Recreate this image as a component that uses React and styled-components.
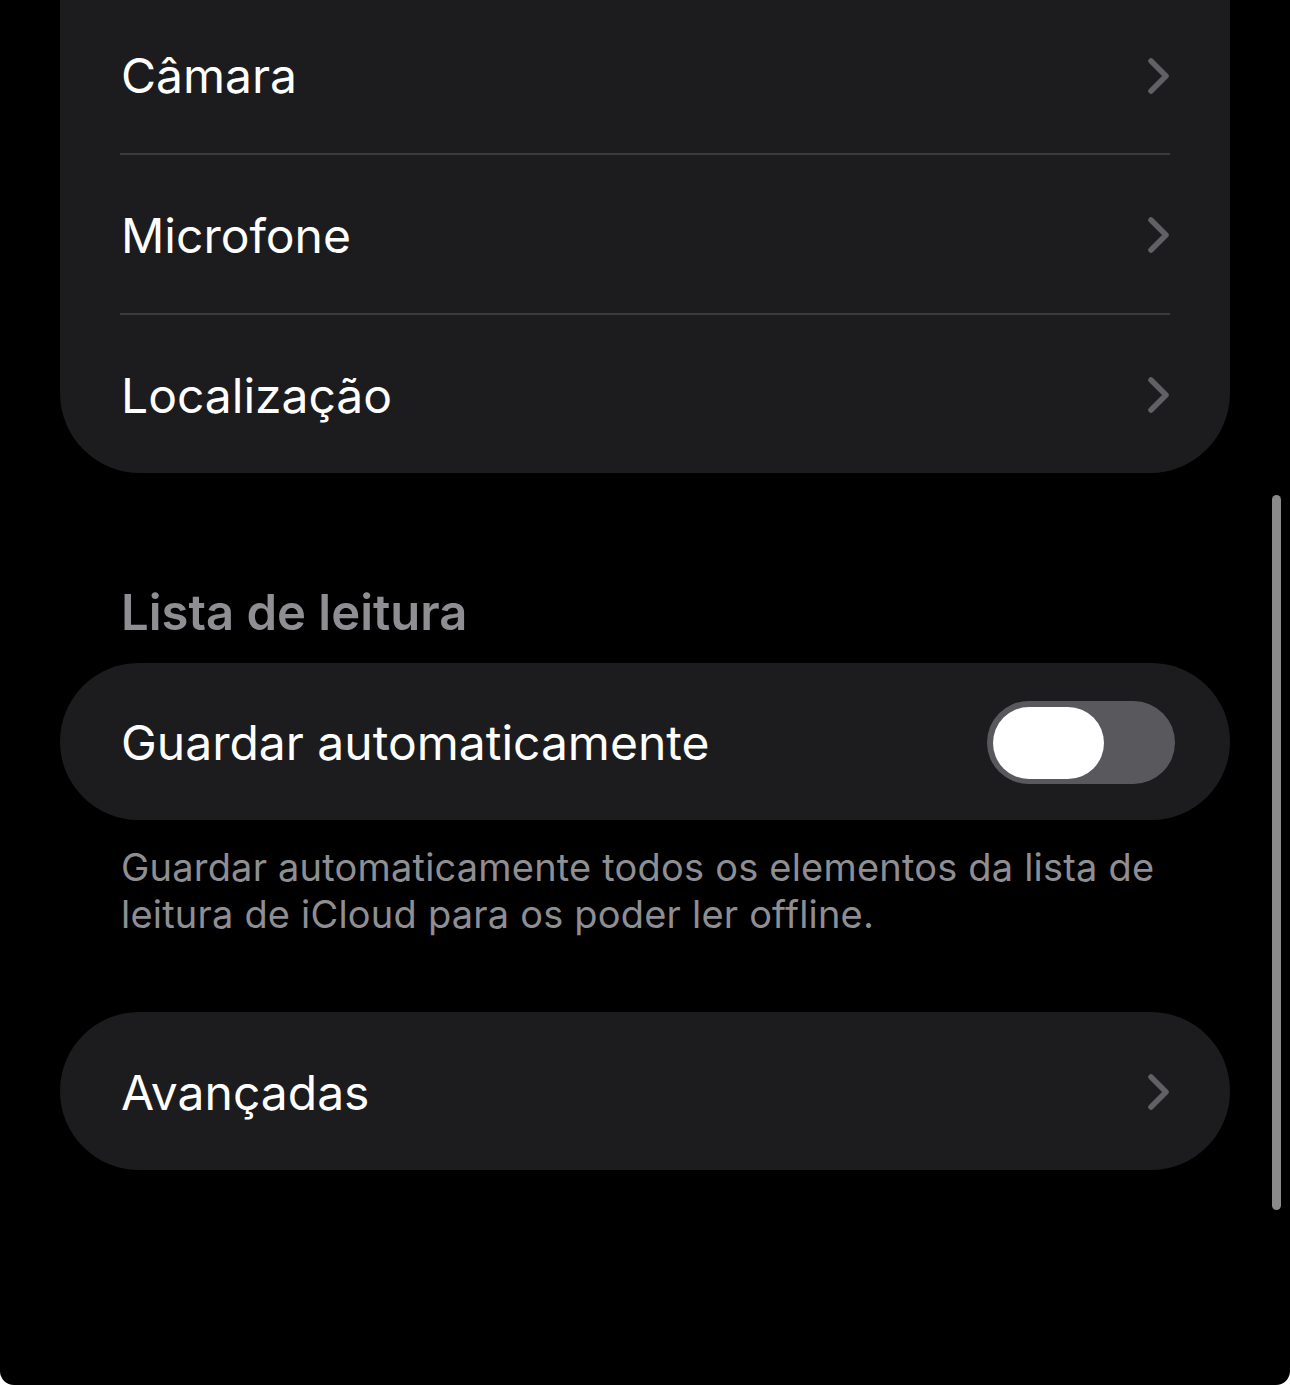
import React from "react";
import styled, { createGlobalStyle } from "styled-components";

const Global = createGlobalStyle`
  html, body { margin: 0; padding: 0; background: #ffffff; }
  body { font-family: Inter, "Noto Sans", "Liberation Sans", sans-serif; -webkit-font-smoothing: antialiased; }
`;

const Screen = styled.div`
  position: relative;
  width: 1290px;
  height: 1385px;
  background: #000000;
  border-radius: 0 0 14px 14px;
  overflow: hidden;
  padding: 0 60px;
  box-sizing: border-box;
`;

const Card = styled.div`
  background: #1c1c1e;
  border-radius: ${(p) => (p.$openTop ? "0 0 80px 80px" : "80px")};
  margin-top: ${(p) => p.$mt || 0}px;
  overflow: hidden;
`;

const Row = styled.div`
  height: ${(p) => p.$h || 158}px;
  display: flex;
  align-items: center;
  justify-content: space-between;
  padding: 2px 60px 0 61px;
  box-sizing: border-box;
`;

const Label = styled.span`
  color: #ffffff;
  font-size: 48px;
  letter-spacing: 0;
  font-weight: 400;
`;

const Separator = styled.div`
  height: 2px;
  margin: 0 60px;
  background: #3a3a3d;
`;

const Header = styled.div`
  margin: 110px 0 20px 61px;
  height: 60px;
  line-height: 60px;
  color: #8e8e93;
  font-size: 49px;
  font-weight: 600;
`;

const Footer = styled.div`
  margin: 24px 0 74px 61px;
  color: #8e8e93;
  font-size: 38px;
  line-height: 47px;
  letter-spacing: 0.2px;
  max-width: 1070px;
`;

const Toggle = styled.div`
  width: 188px;
  height: 83px;
  border-radius: 42px;
  background: #59595d;
  display: flex;
  align-items: center;
  padding: 0 6px;
  box-sizing: border-box;
  margin-right: -5px;
`;

const Knob = styled.div`
  width: 111px;
  height: 72px;
  border-radius: 36px;
  background: #ffffff;
`;

const ScrollBar = styled.div`
  position: absolute;
  left: 1272px;
  top: 495px;
  width: 9px;
  height: 715px;
  border-radius: 5px;
  background: #8a8a8a;
`;

const Chevron = () => (
  <svg width="26" height="40" viewBox="0 0 26 40" style={{ marginRight: -2 }}>
    <path d="M5 5 L20 20 L5 35" fill="none" stroke="#616165" strokeWidth="5.5" strokeLinecap="round" strokeLinejoin="round" />
  </svg>
);

export default function App() {
  return (
    <>
      <Global />
      <Screen>
        <Card $openTop $mt={-4}>
          <Row $h={157}>
            <Label>Câmara</Label>
            <Chevron />
          </Row>
          <Separator />
          <Row>
            <Label>Microfone</Label>
            <Chevron />
          </Row>
          <Separator />
          <Row>
            <Label>Localização</Label>
            <Chevron />
          </Row>
        </Card>
        <Header>Lista de leitura</Header>
        <Card>
          <Row $h={157}>
            <Label>Guardar automaticamente</Label>
            <Toggle>
              <Knob />
            </Toggle>
          </Row>
        </Card>
        <Footer>
          Guardar automaticamente todos os elementos da lista de leitura de iCloud para os poder ler offline.
        </Footer>
        <Card>
          <Row>
            <Label>Avançadas</Label>
            <Chevron />
          </Row>
        </Card>
        <ScrollBar />
      </Screen>
    </>
  );
}
